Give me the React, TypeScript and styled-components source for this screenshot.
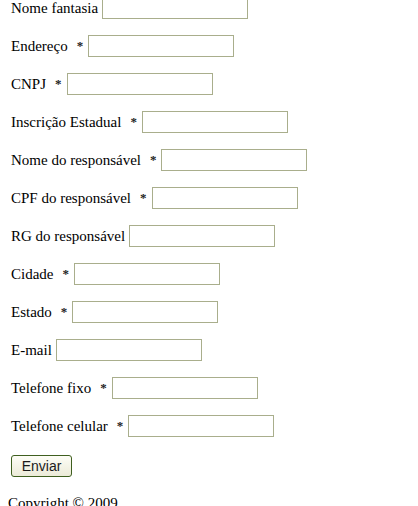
import styled, { createGlobalStyle } from "styled-components";

const GlobalStyle = createGlobalStyle`
  html, body {
    margin: 0;
    padding: 0;
    background: #ffffff;
    overflow: hidden;
  }
  body {
    font-family: "Liberation Serif", "Times New Roman", serif;
    font-size: 15px;
    color: #000000;
  }
`;

const Page = styled.div`
  padding: 0 8px;
`;

const Form = styled.form`
  margin-top: -3px;
  padding-left: 3px;
`;

const Row = styled.div`
  height: 22px;
  line-height: 22px;
  margin-bottom: 16px;
  white-space: nowrap;
`;

const Label = styled.span<{ $required: boolean }>`
  vertical-align: top;
  margin-right: ${(p) => (p.$required ? "0" : "4px")};
`;

const Req = styled.span`
  display: inline-block;
  vertical-align: top;
  margin: 0 5px 0 9px;
  font-weight: bold;
  font-size: 13px;
  color: #222;
`;

const Field = styled.input`
  box-sizing: border-box;
  vertical-align: top;
  width: 146px;
  height: 22px;
  margin: 0;
  padding: 1px 3px;
  border: 1px solid #a9ae8c;
  background: #ffffff;
  font-family: "Liberation Sans", Arial, sans-serif;
  font-size: 13px;
  outline: none;
`;

const SubmitButton = styled.button`
  box-sizing: border-box;
  width: 61px;
  height: 22px;
  margin: 2px 0 0 0;
  padding: 0;
  border: 1px solid #3f5f1f;
  border-radius: 3px;
  background: linear-gradient(#fdfdf6, #ecebd8);
  font-family: "Liberation Sans", Arial, sans-serif;
  font-size: 14px;
  color: #1b1b1b;
  cursor: pointer;
`;

const Footer = styled.p`
  margin: 18px 0 0 0;
  line-height: 17px;
`;

const fields: { label: string; required: boolean }[] = [
  { label: "Nome fantasia", required: false },
  { label: "Endereço", required: true },
  { label: "CNPJ", required: true },
  { label: "Inscrição Estadual", required: true },
  { label: "Nome do responsável", required: true },
  { label: "CPF do responsável", required: true },
  { label: "RG do responsável", required: false },
  { label: "Cidade", required: true },
  { label: "Estado", required: true },
  { label: "E-mail", required: false },
  { label: "Telefone fixo", required: true },
  { label: "Telefone celular", required: true },
];

export default function App() {
  return (
    <>
      <GlobalStyle />
      <Page>
        <Form onSubmit={(e) => e.preventDefault()}>
          {fields.map((f) => (
            <Row key={f.label}>
              <Label $required={f.required}>{f.label}</Label>
              {f.required && <Req>*</Req>}
              <Field type="text" />
            </Row>
          ))}
          <SubmitButton type="submit">Enviar</SubmitButton>
        </Form>
        <Footer>Copyright © 2009</Footer>
      </Page>
    </>
  );
}
